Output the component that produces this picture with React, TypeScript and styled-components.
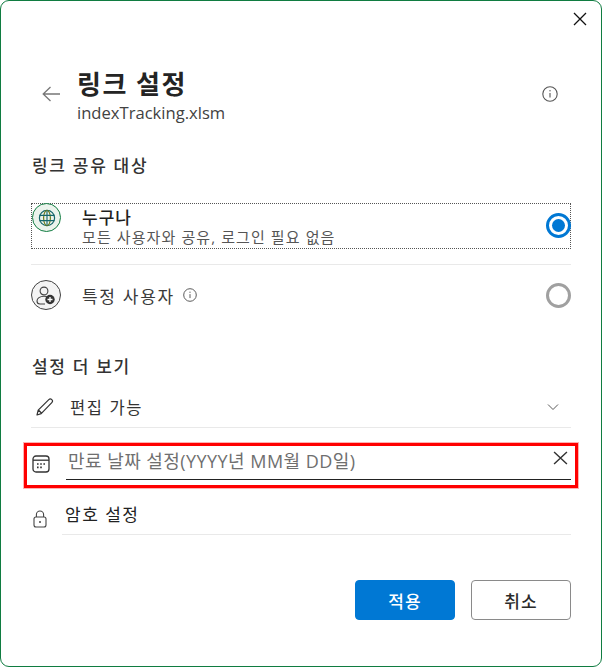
import React from "react";
import styled, { createGlobalStyle } from "styled-components";

const Global = createGlobalStyle`
  html, body { margin: 0; padding: 0; background: #fff; }
  * { box-sizing: border-box; }
`;

const Dialog = styled.div`
  position: relative;
  width: 602px;
  height: 667px;
  border: 1px solid #107c41;
  border-radius: 9px;
  background: #fff;
  padding: 0 30px;
  font-family: "Open Sans", "Noto Sans CJK KR", sans-serif;
  color: #242424;
  overflow: hidden;
`;

const CloseButton = styled.div`
  position: absolute;
  top: 11px;
  right: 14px;
  width: 14px;
  height: 14px;
  display: flex;
`;

const Header = styled.header`
  display: flex;
  align-items: center;
  height: 64px;
  margin-top: 61px;
  padding: 0 13px 0 11px;
`;

const BackIcon = styled.div`
  width: 18px;
  height: 16px;
  display: flex;
  margin-right: 17px;
`;

const TitleBlock = styled.div`
  flex: 1;
  display: flex;
  flex-direction: column;
`;

const Title = styled.h1`
  margin: 2px 0 0;
  font-size: 26px;
  line-height: 36px;
  font-weight: 700;
  letter-spacing: 1.5px;
  color: #242424;
`;

const FileName = styled.div`
  font-size: 16.6px;
  line-height: 22px;
  color: #424242;
`;

const SectionLabel = styled.h2<{ $top: number }>`
  margin: ${(p) => p.$top}px 0 0 1px;
  font-size: 17px;
  line-height: 24px;
  font-weight: 500;
  letter-spacing: 1.7px;
  color: #333;
`;

const OptionRow = styled.div<{ $focused?: boolean; $top: number; $h: number }>`
  display: flex;
  align-items: ${(p) => (p.$focused ? "flex-start" : "center")};
  height: ${(p) => p.$h}px;
  margin-top: ${(p) => p.$top}px;
  border: ${(p) => (p.$focused ? "1px dotted #555" : "none")};
`;

const Avatar = styled.div<{ $green?: boolean }>`
  flex: none;
  width: ${(p) => (p.$green ? 29 : 30)}px;
  height: ${(p) => (p.$green ? 29 : 30)}px;
  margin-top: ${(p) => (p.$green ? -1 : 0)}px;
  border-radius: 50%;
  border: 1.5px solid ${(p) => (p.$green ? "#107c41" : "#424242")};
  background: ${(p) => (p.$green ? "#ebf3ec" : "#f3f3f3")};
  display: flex;
  align-items: center;
  justify-content: center;
`;

const OptionText = styled.div`
  flex: 1;
  margin-left: 21px;
  display: flex;
  flex-direction: column;
`;

const OptionTitle = styled.div`
  font-size: 17px;
  line-height: 21px;
  margin-top: 3px;
  font-weight: 500;
  letter-spacing: 1px;
  color: #1f1f1f;
`;

const OptionSub = styled.div`
  font-size: 15px;
  line-height: 19px;
  letter-spacing: 1.1px;
  color: #555;
`;

const Inline = styled.div`
  display: flex;
  align-items: center;
  gap: 8px;
  margin-left: 21px;
  flex: 1;
  font-size: 17px;
  letter-spacing: 1.7px;
  color: #3a3a3a;
`;

const Radio = styled.div<{ $on?: boolean; $top?: number }>`
  flex: none;
  width: 25px;
  height: 25px;
  margin-top: ${(p) => p.$top ?? 0}px;
  margin-right: ${(p) => (p.$on ? -1 : 0)}px;
  border-radius: 50%;
  border: 3px solid ${(p) => (p.$on ? "#0078d4" : "#a0a0a0")};
  display: flex;
  align-items: center;
  justify-content: center;
  &::after {
    content: "";
    display: ${(p) => (p.$on ? "block" : "none")};
    width: 13px;
    height: 13px;
    border-radius: 50%;
    background: #0078d4;
  }
`;

const Divider = styled.div<{ $top: number; $left?: number }>`
  height: 1px;
  background: #e9e9e9;
  margin-top: ${(p) => p.$top}px;
  margin-left: ${(p) => p.$left ?? 0}px;
`;

const EditRow = styled.div`
  display: flex;
  align-items: center;
  height: 30px;
  margin-top: 13px;
  padding: 0 12px 0 5px;
`;

const RowText = styled.div`
  flex: 1;
  margin-left: 16px;
  font-size: 16.5px;
  letter-spacing: 1.6px;
  color: #333;
`;

const Highlight = styled.div`
  display: flex;
  height: 45px;
  margin: 15px -7px 0 -7px;
  border: 3px solid #ff0000;
  box-shadow: 0 0 0 1px rgba(255, 0, 0, 0.3);
  padding: 0 4px 0 5px;
`;

const CalendarSlot = styled.div`
  width: 18px;
  height: 18px;
  margin-top: 9px;
  display: flex;
`;

const DateField = styled.div`
  position: relative;
  flex: 1;
  height: 34px;
  margin-left: 16px;
  border-bottom: 1.5px solid #222;
  padding: 1px 0 0 2px;
  font-size: 18px;
  line-height: 28px;
  letter-spacing: 0.45px;
  color: #6f6f6f;
`;

const ClearButton = styled.div`
  position: absolute;
  top: 5px;
  right: 3px;
  width: 15px;
  height: 14px;
  display: flex;
`;

const PasswordRow = styled.div`
  display: flex;
  align-items: flex-end;
  height: 34px;
  margin-top: 9px;
  padding-left: 2px;
`;

const LockSlot = styled.div`
  width: 14px;
  height: 18px;
  display: flex;
  margin-bottom: 3px;
`;

const PasswordLabel = styled.div`
  margin-left: 18px;
  margin-bottom: 3px;
  font-size: 17px;
  line-height: 26px;
  letter-spacing: 1.5px;
  color: #222;
`;

const Footer = styled.div`
  display: flex;
  justify-content: flex-end;
  gap: 16px;
  margin-top: 45px;
`;

const FooterButton = styled.button<{ $primary?: boolean }>`
  width: 100px;
  height: 40px;
  border-radius: 4px;
  border: 1px solid ${(p) => (p.$primary ? "#0078d4" : "#8a8a8a")};
  background: ${(p) => (p.$primary ? "#0078d4" : "#fff")};
  color: ${(p) => (p.$primary ? "#fff" : "#2b2b2b")};
  font-family: inherit;
  font-size: 17px;
  font-weight: 500;
  letter-spacing: 1px;
  padding: 0;
`;

const Svg = styled.svg`
  display: block;
  width: 100%;
  height: 100%;
`;

const SmallInfo = styled.span<{ $size: number }>`
  display: inline-flex;
  width: ${(p) => p.$size}px;
  height: ${(p) => p.$size}px;
`;

const InfoIcon = ({ size }: { size: number }) => (
  <SmallInfo $size={size}>
    <Svg viewBox="0 0 16 16" fill="none">
      <circle cx="8" cy="8" r="7.2" stroke="#555" strokeWidth="1.1" />
      <path d="M8 7v4.5" stroke="#555" strokeWidth="1.1" />
      <circle cx="8" cy="4.8" r="0.7" fill="#555" />
    </Svg>
  </SmallInfo>
);

const Cross = ({ color }: { color: string }) => (
  <Svg viewBox="0 0 14 14" fill="none" preserveAspectRatio="none">
    <path d="M1 1l12 12M13 1L1 13" stroke={color} strokeWidth="1.3" />
  </Svg>
);

const Globe = () => (
  <svg width="18" height="18" viewBox="0 0 18 18" fill="none">
    <circle cx="9" cy="9" r="7.6" stroke="#14666a" strokeWidth="1.2" />
    <ellipse cx="9" cy="9" rx="3.4" ry="7.6" stroke="#6e7d1e" strokeWidth="1.2" />
    <path d="M1.6 6.4h14.8M1.6 11.6h14.8M9 1.4v15.2" stroke="#14666a" strokeWidth="1.1" />
  </svg>
);

const PersonAdd = () => (
  <svg width="24" height="24" viewBox="0 0 24 24" fill="none">
    <circle cx="10" cy="8" r="3.9" stroke="#424242" strokeWidth="1.1" />
    <path d="M11 21H6a3 3 0 0 1-3-3c0-2.6 2.8-4.8 7-4.8 1 0 2 .1 2.8.4" stroke="#424242" strokeWidth="1.1" />
    <circle cx="16" cy="16.5" r="4.7" fill="#333" />
    <path d="M16 14v5M13.5 16.5h5" stroke="#fff" strokeWidth="1.3" />
  </svg>
);

export default function App() {
  return (
    <>
      <Global />
      <Dialog>
        <CloseButton>
          <Cross color="#111" />
        </CloseButton>

        <Header>
          <BackIcon>
            <Svg viewBox="0 0 18 16" fill="none">
              <path d="M8.5 1L1.2 8l7.3 7M1.2 8H18" stroke="#777" strokeWidth="1.3" />
            </Svg>
          </BackIcon>
          <TitleBlock>
            <Title>링크 설정</Title>
            <FileName>indexTracking.xlsm</FileName>
          </TitleBlock>
          <InfoIcon size={16} />
        </Header>

        <SectionLabel $top={28}>링크 공유 대상</SectionLabel>

        <OptionRow $focused $top={25} $h={46}>
          <Avatar $green>
            <Globe />
          </Avatar>
          <OptionText>
            <OptionTitle>누구나</OptionTitle>
            <OptionSub>모든 사용자와 공유, 로그인 필요 없음</OptionSub>
          </OptionText>
          <Radio $on $top={9} />
        </OptionRow>

        <Divider $top={15} />

        <OptionRow $top={15} $h={30}>
          <Avatar>
            <PersonAdd />
          </Avatar>
          <Inline>
            특정 사용자
            <InfoIcon size={14} />
          </Inline>
          <Radio />
        </OptionRow>

        <SectionLabel $top={45}>설정 더 보기</SectionLabel>

        <EditRow>
          <SmallInfo $size={18}>
            <Svg viewBox="0 0 18 18" fill="none">
              <path
                d="M1 17l1.2-4.8L12.8 1.6a2.1 2.1 0 0 1 3 3L5.2 15.6 1 17zM2.4 12l3 3"
                stroke="#333"
                strokeWidth="1.2"
                strokeLinejoin="round"
              />
            </Svg>
          </SmallInfo>
          <RowText>편집 가능</RowText>
          <SmallInfo $size={12}>
            <Svg viewBox="0 0 12 12" fill="none">
              <path d="M1 3.5l5 5 5-5" stroke="#5a5a5a" strokeWidth="1" />
            </Svg>
          </SmallInfo>
        </EditRow>
        <Divider $top={5} />

        <Highlight>
          <CalendarSlot>
            <Svg viewBox="0 0 18 18" fill="none">
              <rect x="1" y="1" width="16" height="16" rx="3" stroke="#333" strokeWidth="1.3" />
              <path d="M1 5.2h16" stroke="#333" strokeWidth="1.3" />
              <path d="M5 9h1.6M8.2 9h1.6M11.4 9h1.6M5 12.4h1.6M8.2 12.4h1.6" stroke="#333" strokeWidth="1.6" />
            </Svg>
          </CalendarSlot>
          <DateField>
            만료 날짜 설정(YYYY년 MM월 DD일)
            <ClearButton>
              <Cross color="#333" />
            </ClearButton>
          </DateField>
        </Highlight>

        <PasswordRow>
          <LockSlot>
            <Svg viewBox="0 0 14 18" fill="none">
              <rect x="1" y="7" width="12" height="10" rx="2" stroke="#444" strokeWidth="1.1" />
              <path d="M3.4 7V4.6a3.6 3.6 0 0 1 7.2 0V7" stroke="#444" strokeWidth="1.1" />
              <circle cx="7" cy="12" r="1" fill="#444" />
            </Svg>
          </LockSlot>
          <PasswordLabel>암호 설정</PasswordLabel>
        </PasswordRow>
        <Divider $top={3} $left={31} />

        <Footer>
          <FooterButton $primary>적용</FooterButton>
          <FooterButton>취소</FooterButton>
        </Footer>
      </Dialog>
    </>
  );
}
